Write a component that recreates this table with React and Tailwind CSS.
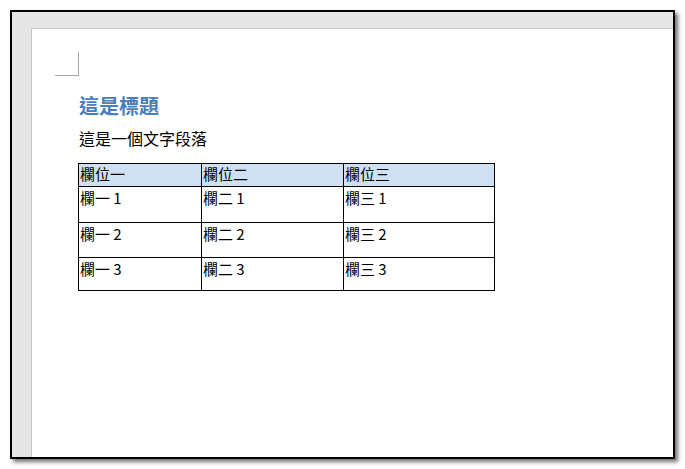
export default function App() {
  const rows = [
    ["欄一 1", "欄二 1", "欄三 1", "h-[36px]"],
    ["欄一 2", "欄二 2", "欄三 2", "h-[35px]"],
    ["欄一 3", "欄二 3", "欄三 3", "h-[33px]"],
  ];
  return (
    <div className="w-[685px] h-[469px] bg-white pt-[10px] pl-[10px] font-['Noto_Sans_CJK_TC',sans-serif]">
      <div className="w-[665px] h-[449px] border-2 border-black bg-[#e6e6e6] pt-[16px] pl-[19px] shadow-[3px_3px_4px_rgba(0,0,0,0.55)]">
        <div className="h-full bg-white border-l border-t border-[#c6c6c6] pt-[23px] pl-[23px]">
          {/* page corner mark */}
          <div className="w-[24px] h-[24px] border-r border-b border-[#a6a6a6]" />
          <div className="ml-[23px]">
            <h1 className="mt-[18px] pl-[1px] text-[20px] leading-[24px] font-bold text-[#4a7ebb]">
              這是標題
            </h1>
            <p className="mt-[9px] pl-[1px] text-[16px] leading-[22px] text-black">
              這是一個文字段落
            </p>
            <table className="mt-[14px] border-collapse text-[15px] leading-[19px] text-black">
              <thead>
                <tr className="h-[23px] bg-[#cfe0f2]">
                  <td className="w-[123px] border border-black px-[1px] align-top">欄位一</td>
                  <td className="w-[142px] border border-black px-[1px] align-top">欄位二</td>
                  <td className="w-[151px] border border-black px-[1px] align-top">欄位三</td>
                </tr>
              </thead>
              <tbody>
                {rows.map((r) => (
                  <tr key={r[0]} className={r[3]}>
                    <td className="border border-black px-[1px] pt-[1px] align-top">{r[0]}</td>
                    <td className="border border-black px-[1px] pt-[1px] align-top">{r[1]}</td>
                    <td className="border border-black px-[1px] pt-[1px] align-top">{r[2]}</td>
                  </tr>
                ))}
              </tbody>
            </table>
          </div>
        </div>
      </div>
    </div>
  );
}
